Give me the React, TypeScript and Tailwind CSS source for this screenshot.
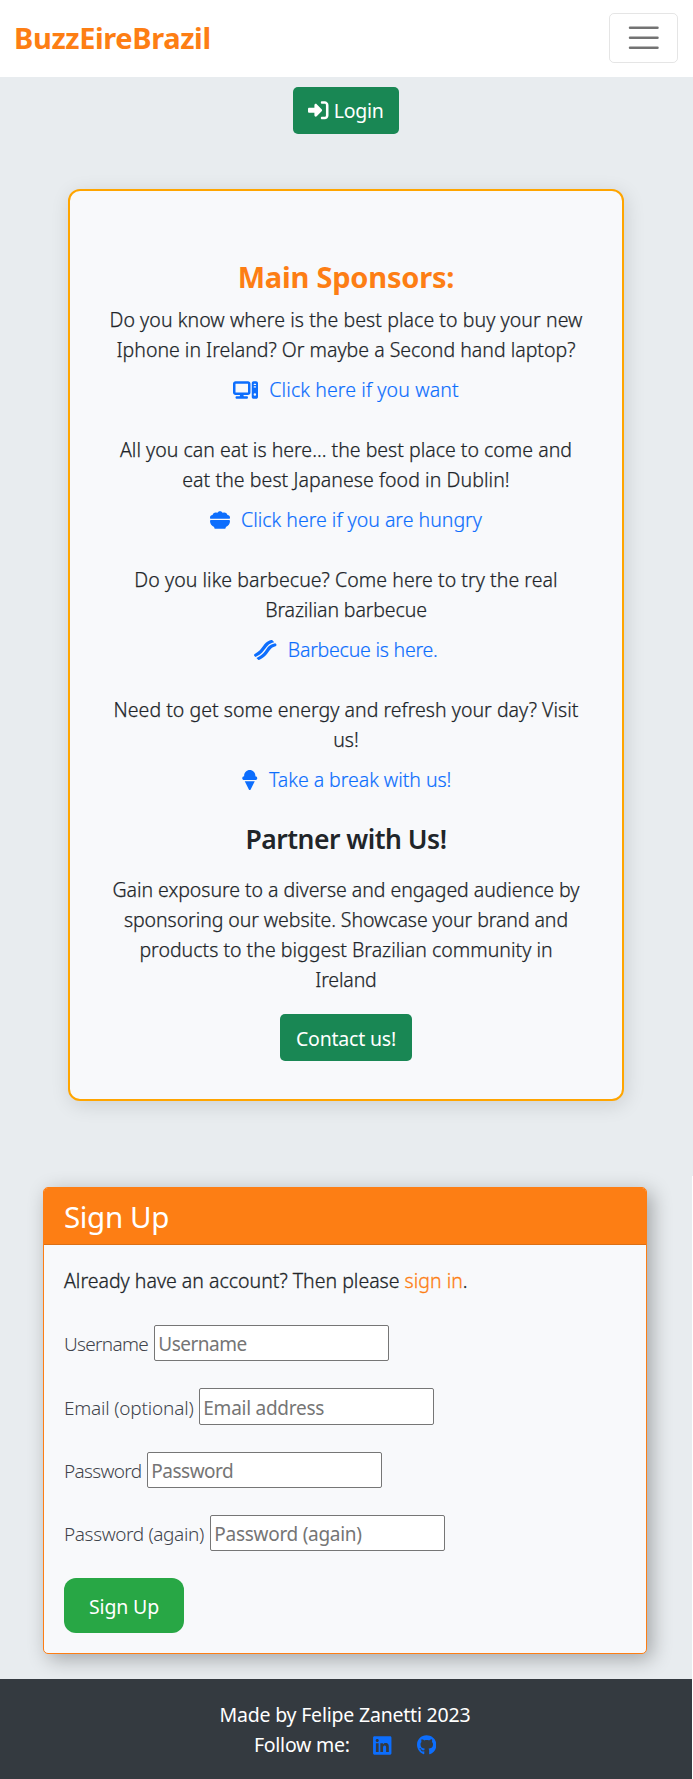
import type { ReactNode } from 'react';
import {
  FaBacon,
  FaBowlFood,
  FaComputer,
  FaGithub,
  FaIceCream,
  FaLinkedin,
  FaRightToBracket,
} from 'react-icons/fa6';

type Line = { text: string; track: string };

type Sponsor = {
  lines: Line[];
  icon: ReactNode;
  link: Line;
};

const sponsors: Sponsor[] = [
  {
    lines: [
      { text: 'Do you know where is the best place to buy your new', track: 'tracking-[0.07px]' },
      { text: 'Iphone in Ireland? Or maybe a Second hand laptop?', track: 'tracking-normal' },
    ],
    icon: <FaComputer className="h-5 w-[25px]" />,
    link: { text: 'Click here if you want', track: 'tracking-[0.12px]' },
  },
  {
    lines: [
      { text: 'All you can eat is here... the best place to come and', track: 'tracking-[0.01px]' },
      { text: 'eat the best Japanese food in Dublin!', track: 'tracking-[0.07px]' },
    ],
    icon: <FaBowlFood className="size-5" />,
    link: { text: 'Click here if you are hungry', track: 'tracking-[0.01px]' },
  },
  {
    lines: [
      { text: 'Do you like barbecue? Come here to try the real', track: 'tracking-[0.05px]' },
      { text: 'Brazilian barbecue', track: 'tracking-[-0.12px]' },
    ],
    icon: <FaBacon className="h-5 w-[22.5px]" />,
    link: { text: 'Barbecue is here.', track: 'tracking-[-0.22px]' },
  },
  {
    lines: [
      { text: 'Need to get some energy and refresh your day? Visit', track: 'tracking-[0.03px]' },
      { text: 'us!', track: 'tracking-normal' },
    ],
    icon: <FaIceCream className="h-5 w-[17.5px]" />,
    link: { text: 'Take a break with us!', track: 'tracking-[-0.03px]' },
  },
];

const pitch: Line[] = [
  { text: 'Gain exposure to a diverse and engaged audience by', track: 'tracking-[-0.05px]' },
  { text: 'sponsoring our website. Showcase your brand and', track: 'tracking-[-0.08px]' },
  { text: 'products to the biggest Brazilian community in', track: 'tracking-[0.01px]' },
  { text: 'Ireland', track: 'tracking-[-0.16px]' },
];

const fields = [
  { label: 'Username', labelBox: 'w-[90.3px] tracking-[-0.7px]', placeholder: 'Username', type: 'text', track: 'tracking-[-0.5px]' },
  { label: 'Email (optional)', labelBox: 'w-[135.3px] tracking-[-0.2px]', placeholder: 'Email address', type: 'email', track: 'tracking-[-0.25px]' },
  { label: 'Password', labelBox: 'w-[83.3px] tracking-[-0.68px]', placeholder: 'Password', type: 'password', track: 'tracking-[-0.5px]' },
  { label: 'Password (again)', labelBox: 'w-[146.3px] tracking-[-0.38px]', placeholder: 'Password (again)', type: 'password', track: 'tracking-[-0.28px]' },
];

function Lines({ lines }: { lines: Line[] }) {
  return (
    <p className="font-light [-webkit-text-stroke:0.25px]">
      {lines.map((line) => (
        <span key={line.text} className={`block whitespace-nowrap ${line.track}`}>
          {line.text}
        </span>
      ))}
    </p>
  );
}

function Navbar() {
  return (
    <nav className="flex h-[77px] items-start justify-between bg-white pt-[13px] pr-[15px] pl-[14px]">
      <a href="#" className="mt-[2px] text-[29px] leading-[45px] font-bold tracking-[-0.38px] text-[#fd7e14]">
        BuzzEireBrazil
      </a>
      <button
        type="button"
        aria-label="Toggle navigation"
        className="flex h-[49.5px] w-[69px] items-center justify-center rounded-[5px] border border-black/10"
      >
        <svg viewBox="0 0 30 30" className="size-[37.5px]" fill="none">
          <path d="M4 7h22M4 15h22M4 23h22" stroke="rgba(0,0,0,0.55)" strokeWidth="2" strokeLinecap="round" strokeMiterlimit="10" />
        </svg>
      </button>
    </nav>
  );
}

function SponsorCard() {
  return (
    <section className="mx-auto flex h-[912px] w-[556px] flex-col items-center rounded-[12px] border-2 border-[#ffa500] bg-[#f8f9fb] pt-[68px] text-center shadow-[2px_4px_20px_rgba(0,0,0,0.12)]">
      <h2 className="text-[29px] leading-[36px] font-bold tracking-[-0.2px] text-[#fd7e14]">Main Sponsors:</h2>
      <div className="mt-[10px] flex flex-col gap-[30px]">
        {sponsors.map((s) => (
          <div key={s.link.text} className="flex flex-col items-center gap-[10px]">
            <Lines lines={s.lines} />
            <a href="#" className="flex h-[30px] items-center gap-[11px] text-[#0d6efd]">
              {s.icon}
              <span className={`font-light [-webkit-text-stroke:0.2px] ${s.link.track}`}>{s.link.text}</span>
            </a>
          </div>
        ))}
      </div>
      <h3 className="mt-7 text-[26.5px] leading-[33px] font-semibold tracking-[-0.51px]">Partner with Us!</h3>
      <div className="mt-[19px]">
        <Lines lines={pitch} />
      </div>
      <a
        href="#"
        className="mt-[19px] flex h-[47px] w-[132px] items-center justify-center rounded-[5px] bg-[#198754] pt-[2px] tracking-[-0.19px] text-white"
      >
        Contact us!
      </a>
    </section>
  );
}

function SignUpCard() {
  return (
    <section className="ml-[43px] h-[467px] w-[604px] rounded-[5px] border border-[#fd7e14] bg-[#f8f9fb] shadow-[5px_5px_20px_rgba(0,0,0,0.3)]">
      <h2 className="h-[57px] rounded-t-[4px] border-b border-[#dc7016] bg-[#fd7e14] pt-[6px] pl-5 text-[29.5px] leading-[45px] tracking-[-0.35px] text-white">
        Sign Up
      </h2>
      <div className="pt-[21px] pl-5">
        <p className="font-light whitespace-pre [-webkit-text-stroke:0.3px]">
          Already have an account? Then please{' '}
          <a href="#" className="text-[#fd7e14]">
            sign in
          </a>
          .
        </p>
        <form className="mt-[29.1px] flex flex-col gap-[26.9px]">
          {fields.map((f) => (
            <label key={f.label} className="flex h-[36.4px] items-center text-[19px] font-light">
              <span className={`shrink-0 pt-[2px] whitespace-nowrap text-[#3f444b] ${f.labelBox}`}>{f.label}</span>
              <input
                type={f.type}
                placeholder={f.placeholder}
                className={`h-[36.4px] w-[235px] rounded-[2px] border border-[#767676] bg-white px-[3px] pt-[2px] font-normal placeholder:text-[#757575] ${f.track}`}
              />
            </label>
          ))}
          <button
            type="button"
            className="h-[55px] w-[120px] rounded-[12px] bg-[#28a745] pt-[2px] tracking-[-0.13px] text-white"
          >
            Sign Up
          </button>
        </form>
      </div>
    </section>
  );
}

function Footer() {
  return (
    <footer className="relative flex h-[100px] w-[692px] flex-col items-center bg-[#343a40] pt-[21px] pr-[2px] text-white">
      <p className="tracking-[-0.21px]">Made by Felipe Zanetti 2023</p>
      <div className="flex h-[30px] items-center">
        <span className="tracking-[-0.25px]">Follow me:</span>
        <a href="#" aria-label="LinkedIn" className="ml-[23.5px] text-[#0d6efd]">
          <FaLinkedin className="h-[21px] w-[18.5px]" />
        </a>
        <a href="#" aria-label="GitHub" className="ml-[25px] text-[#0d6efd]">
          <FaGithub className="h-5 w-[19.4px]" />
        </a>
      </div>
    </footer>
  );
}

export default function App() {
  return (
    <div className="h-[1779px] w-[693px] overflow-hidden bg-white font-['Noto_Sans','Open_Sans',sans-serif] text-[19.5px] leading-[30px] text-[#212529]">
      <Navbar />
      <main>
        <div className="h-[1099px] bg-[#e8ecef] pt-[10px] pr-px">
          <a
            href="#"
            className="mx-auto flex h-[47px] w-[106px] items-center justify-center gap-[5px] rounded-[5px] bg-[#198754] tracking-[-0.25px] text-white"
          >
            <FaRightToBracket className="size-[20.5px]" />
            Login
          </a>
          <div className="mt-[55px]">
            <SponsorCard />
          </div>
        </div>
        <div className="h-[503px] w-[692px] bg-[#e8ecef] pt-[11px]">
          <SignUpCard />
        </div>
      </main>
      <Footer />
    </div>
  );
}
